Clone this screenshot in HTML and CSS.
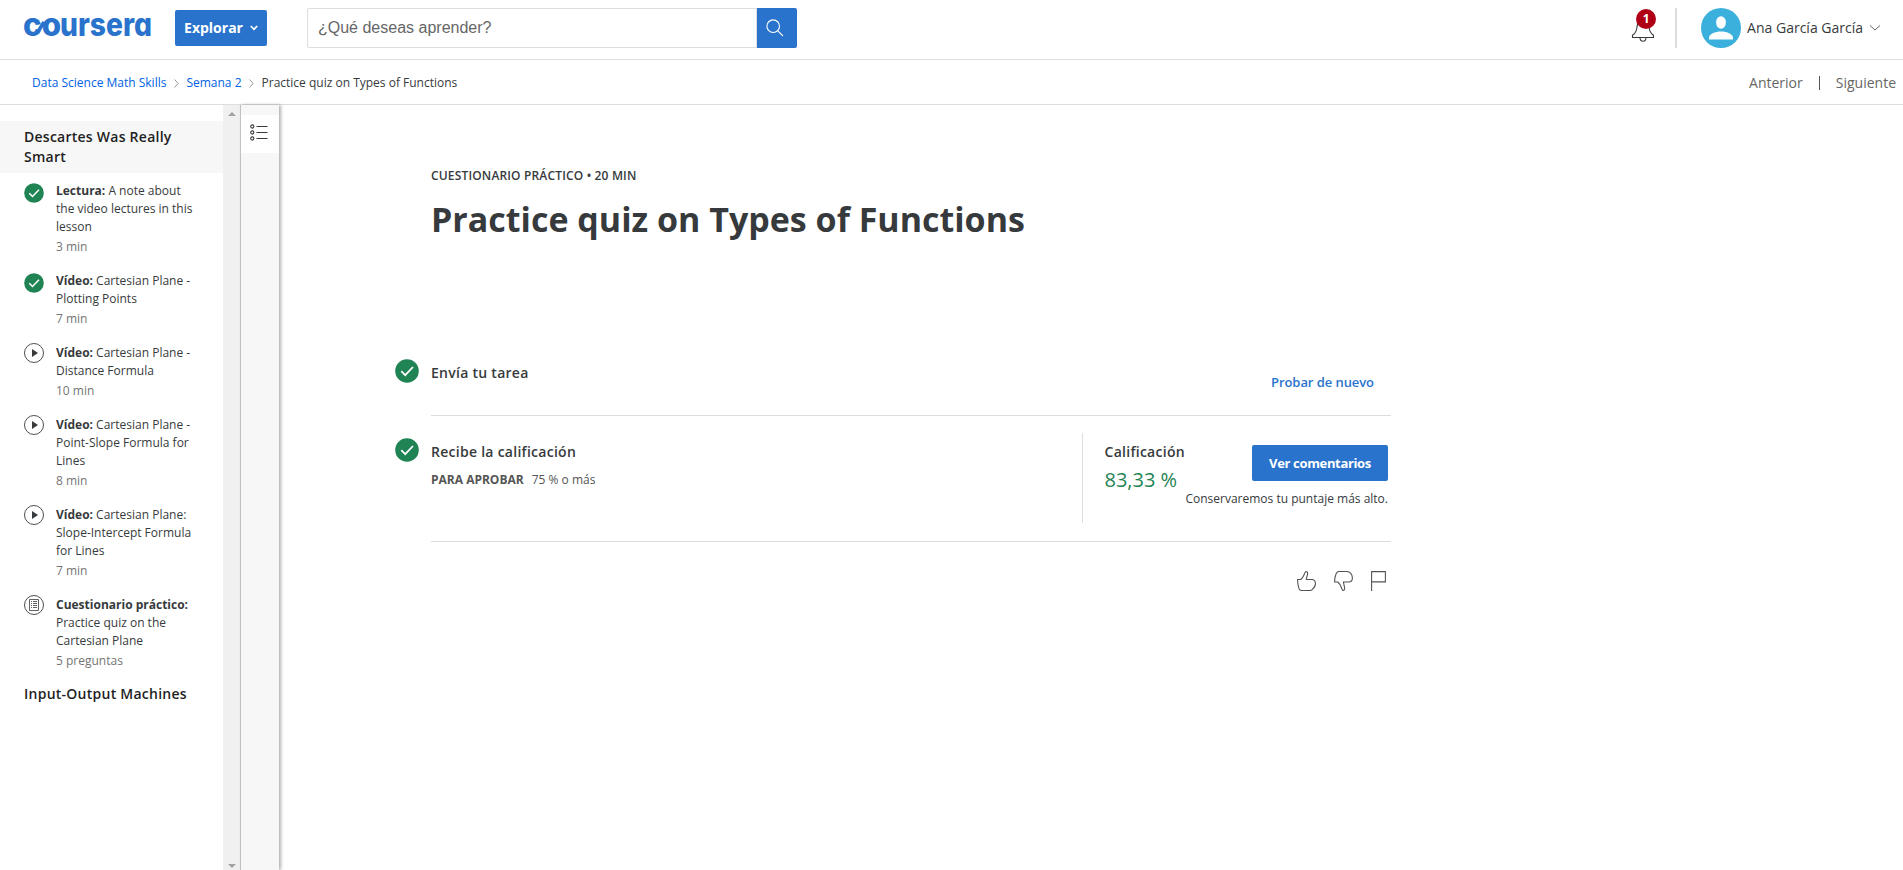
FILE: index.html
```html
<!DOCTYPE html>
<html lang="es">
<head>
<meta charset="utf-8">
<title>Practice quiz on Types of Functions | Coursera</title>
<link rel="stylesheet" href="styles.css">
</head>
<body>
<svg class="defs" width="0" height="0">
  <symbol id="done" viewBox="0 0 24 24"><circle cx="12" cy="12" r="11.800" fill="#1f8354"/><path d="M6.300 12.200l3.900 4L18 8" fill="none" stroke="#fff" stroke-width="1.800"/></symbol>
  <symbol id="play" viewBox="0 0 20 20"><circle cx="10" cy="10" r="9.500" fill="none" stroke="#373a3c" stroke-width=".9"/><path d="M8 6l6 4-6 4z" fill="#373a3c"/></symbol>
  <symbol id="quiz" viewBox="0 0 20 20"><circle cx="10" cy="10" r="9.500" fill="none" stroke="#373a3c" stroke-width=".9"/><path d="M5.500 4.500h9v11h-9zM7 6.500h1M9 6.500h4M7 8.500h1M9 8.500h4M7 10.500h1M9 10.500h4M7 12.500h1M9 12.500h4" fill="none" stroke="#373a3c" stroke-width=".8"/></symbol>
</svg>
<header class="topbar">
  <svg class="logo" width="128" height="24" viewBox="0 0 128 24"><text y="21.500"><tspan x="-1" textLength="38" lengthAdjust="spacingAndGlyphs">co</tspan><tspan x="36" textLength="92" lengthAdjust="spacingAndGlyphs">ursera</tspan></text><path d="M13.500 18.500L20 8" stroke="#2a73cc" stroke-width="3.600"/></svg>
  <button class="explore">Explorar <svg width="8" height="6" viewBox="0 0 8 6"><path d="M.8 1L4 4.300 7.200 1" fill="none" stroke="#fff" stroke-width="1.700"/></svg></button>
  <div class="search"><div class="field">¿Qué deseas aprender?</div><button class="go"><svg width="18" height="18" viewBox="0 0 18 18"><path d="M11.800 11.800L17 17M13.500 7.200a6.300 6.300 0 1 1-12.600 0 6.300 6.300 0 0 1 12.600 0z" fill="none" stroke="#fff" stroke-width="1.100"/></svg></button></div>
  <div class="account">
    <div class="bell"><svg width="24" height="26" viewBox="0 0 24 26"><path d="M1.500 20.500v-2.200c3.200-2 4-4 4.500-8.300C6.500 5.500 8.500 3 12 3s5.500 2.500 6 7c.5 4.300 1.300 6.300 4.500 8.300v2.200zM9 20.500a3 3.700 0 0 0 6 0" fill="none" stroke="#373a3c" stroke-width="1.100"/></svg><span class="badge">1</span></div>
    <svg class="avatar" width="40" height="40" viewBox="0 0 40 40"><circle cx="20" cy="20" r="20" fill="#3bb0dc"/><ellipse cx="20" cy="14.500" rx="4.900" ry="6.200" fill="#fff"/><path d="M8 31.500v-1.500c0-4 6-6.500 12-6.500s12 2.500 12 6.500v1.500z" fill="#fff"/></svg>
    <span class="name">Ana García García</span>
    <svg width="12" height="8" viewBox="0 0 12 8"><path d="M1 1.500l5 4.500 5-4.500" fill="none" stroke="#666" stroke-width="1"/></svg>
  </div>
</header>
<nav class="crumbs">
  <a>Data Science Math Skills</a><svg width="5" height="9" viewBox="0 0 5 9"><path d="M.5.5l3.700 4-3.700 4" fill="none" stroke="#888" stroke-width=".9"/></svg><a>Semana 2</a><svg width="5" height="9" viewBox="0 0 5 9"><path d="M.5.5l3.700 4-3.700 4" fill="none" stroke="#888" stroke-width=".9"/></svg><span class="current">Practice quiz on Types of Functions</span>
  <div class="pager"><span>Anterior</span><i></i><span class="next">Siguiente</span></div>
</nav>
<div class="body">
  <aside class="side">
    <h2 class="lesson active">Descartes Was Really Smart</h2>
    <ul class="items">
      <li class="complete"><svg><use href="#done"/></svg><div><b>Lectura:</b> A note about the video lectures in this lesson<small>3 min</small></div></li>
      <li class="complete"><svg><use href="#done"/></svg><div><b>Vídeo:</b> Cartesian Plane - Plotting Points<small>7 min</small></div></li>
      <li><svg><use href="#play"/></svg><div><b>Vídeo:</b> Cartesian Plane - Distance Formula<small>10 min</small></div></li>
      <li><svg><use href="#play"/></svg><div><b>Vídeo:</b> Cartesian Plane - Point-Slope Formula for Lines<small>8 min</small></div></li>
      <li><svg><use href="#play"/></svg><div><b>Vídeo:</b> Cartesian Plane: Slope-Intercept Formula for Lines<small>7 min</small></div></li>
      <li><svg><use href="#quiz"/></svg><div><b>Cuestionario práctico:</b> Practice quiz on the Cartesian Plane<small>5 preguntas</small></div></li>
    </ul>
    <h2 class="lesson">Input-Output Machines</h2>
  </aside>
  <div class="scroll"><i class="up"></i><i class="down"></i></div>
  <div class="rail"><div class="toggle"><svg width="18" height="18" viewBox="0 0 18 18"><path d="M6.500 2.500h11M6.500 8.500h11M6.500 14.500h11" stroke="#373a3c"/><g fill="none" stroke="#373a3c" stroke-width="1.100"><circle cx="2.300" cy="2.500" r="1.600"/><circle cx="2.300" cy="8.500" r="1.600"/><circle cx="2.300" cy="14.500" r="1.600"/></g></svg></div></div>
  <main class="main">
    <div class="eyebrow">CUESTIONARIO PRÁCTICO • 20 MIN</div>
    <h1>Practice quiz on Types of Functions</h1>
    <section class="step submit">
      <svg class="mark"><use href="#done"/></svg>
      <h3>Envía tu tarea</h3>
      <a class="retry">Probar de nuevo</a>
    </section>
    <section class="step grade">
      <svg class="mark"><use href="#done"/></svg>
      <div class="info"><h3>Recibe la calificación</h3><p><b>PARA APROBAR</b><span>75 % o más</span></p></div>
      <div class="score"><h3>Calificación</h3><div class="pct">83,33 %</div></div>
      <div class="feedback"><button>Ver comentarios</button><p>Conservaremos tu puntaje más alto.</p></div>
    </section>
    <div class="reactions">
      <svg width="19" height="20" viewBox="0 0 19 20"><path d="M.6 8.500h3.200C6.500 6.500 7 3.500 8.300 1.100 9 .2 10.700.8 10.700 2.400c0 2-1.400 3.800-1.400 6.100h5.200c2.500 0 3.900 1.800 3.900 4 0 2.800-1 4.300-2.700 5.500-.6 1-1.300 1.500-2.700 1.500H4.500c-1.500 0-2.400-1-2.700-2.500C1 14.500.6 11.500.6 8.500z"/></svg>
      <svg width="19" height="20" viewBox="0 0 19 20"><path d="M.6 11h3.200c2.700 2 3.200 5 4.500 7.900.8 1 2.400.4 2.400-1.200 0-2.200-1.200-4.500-1.200-6.700h5c2.500 0 3.900-1.800 3.900-4 0-3.800-2.400-6.500-5.400-6.500H4.800C3.200.5 2.700 1.500 2 3 1 5.500.6 8 .6 11z"/></svg>
      <svg width="15" height="20" viewBox="0 0 15 20"><path d="M.6 20V.6h13.800v10.300H.6"/></svg>
    </div>
  </main>
</div>
</body>
</html>
```
FILE: styles.css
```css
* { box-sizing: border-box; }
body { margin: 0; height: 870px; overflow: hidden; display: flex; flex-direction: column; background: #fff; color: #373a3c; font: 14px/20px "Open Sans", sans-serif; }
h1, h2, h3, p, ul { margin: 0; padding: 0; }
button { border: 0; font: inherit; color: #fff; background: #2a73cc; padding: 0; }
.defs { position: absolute; }

.topbar { height: 60px; flex: none; display: flex; border-bottom: 1px solid #ddd; padding: 8px 22px 0 24px; }
.logo { margin: 6px 0 0; overflow: visible; }
.logo text { font: 800 32px "Inter", sans-serif; font-feature-settings: "cv11"; fill: #2a73cc; }
.explore { width: 92px; height: 36px; margin: 2px 0 0 23px; border-radius: 2px; font-weight: 700; display: flex; align-items: center; justify-content: center; gap: 7px; }
.search { display: flex; width: 490px; height: 40px; margin-left: 40px; }
.field { flex: 1; border: 1px solid #ddd; border-radius: 2px 0 0 2px; padding: 0 10px; color: #666; font: 16px/37px "Liberation Sans", sans-serif; }
.go { width: 40px; border-radius: 0 2px 2px 0; display: flex; align-items: center; justify-content: center; padding-right: 4px; }
.account { margin-left: auto; display: flex; align-items: center; height: 40px; }
.bell { position: relative; width: 46px; height: 40px; border-right: 2px solid #ddd; padding-top: 9px; }
.badge { position: absolute; left: 5px; top: 1px; width: 20px; height: 20px; border-radius: 50%; background: #b00016; color: #fff; font: 700 12px/20px "Open Sans", sans-serif; text-align: center; }
.avatar { margin: 0 6px 0 24px; }
.name { margin-right: 6px; }

.crumbs { height: 45px; flex: none; display: flex; align-items: center; border-bottom: 1px solid #ddd; padding: 2px 7px 0 32px; font-size: 12px; gap: 7.5px; }
.crumbs a { color: #0062e4; }
.pager { margin-left: auto; display: flex; align-items: center; font-size: 14px; color: #666; }
.pager i { width: 1px; height: 14px; background: #555; margin: 0 16px; }

.body { flex: 1; display: flex; min-height: 0; }
.side { width: 223px; padding-top: 16px; }
.lesson { font-size: 14px; line-height: 20px; font-weight: 600; letter-spacing: .25px; color: #1f1f1f; padding: 6px 24px; }
.lesson.active { background: #f7f7f7; }
.items { list-style: none; padding: 9px 24px 0; font-size: 12px; line-height: 18px; }
.items li { display: flex; gap: 12px; padding-bottom: 16px; }
.items li:last-child { padding-bottom: 8px; }
.items li > svg { flex: none; width: 20px; height: 20px; margin-top: -1px; }
.items .complete > svg { margin-top: 1px; }
.items small { display: block; font-size: 12px; color: #757575; margin-top: 2px; }
.scroll { width: 17px; background: #f0f0f0; display: flex; flex-direction: column; justify-content: space-between; align-items: center; padding: 7px 0 2px; }
.scroll i { border: 4px solid transparent; }
.scroll .up { border-top: 0; border-bottom-color: #a3a3a3; }
.scroll .down { border-bottom: 0; border-top-color: #a3a3a3; }
.rail { width: 39px; border-left: 1px solid #c1c1c1; background: #f7f7f7; box-shadow: 2px 0 3px rgba(0,0,0,.3); padding-top: 10px; }
.toggle { height: 38px; background: #fff; padding: 9px; }

.main { width: 985px; margin-left: 127px; padding-top: 61px; }
.eyebrow { font-size: 12px; font-weight: 600; letter-spacing: .16px; padding-left: 25px; line-height: 20px; }
h1 { font-size: 34px; line-height: 44px; font-weight: 700; padding-left: 25px; margin-top: 11px; }
h3 { font-size: 14px; line-height: 20px; font-weight: 600; letter-spacing: .27px; }
.step { display: flex; margin-left: 25px; border-bottom: 1px solid #ddd; }
.mark { flex: none; width: 24px; height: 24px; margin: 0 12px 0 -36px; }
.submit { margin-top: 118px; height: 57px; }
.submit h3 { padding-top: 4px; }
.retry { margin: 13px 17px 0 auto; color: #2a73cc; font-size: 13px; font-weight: 600; letter-spacing: -.07px; }
.grade { height: 126px; padding-top: 17px; }
.grade .mark { margin-top: 5px; }
.info { padding-top: 9px; width: 651px; }
.info p { font-size: 12px; margin-top: 8px; color: #555; display: flex; gap: 8px; }
.score { border-left: 1px solid #ddd; padding: 9px 0 0 21.500px; height: 90px; }
.pct { font-size: 20px; line-height: 28px; margin-top: 4px; color: #1f8354; white-space: nowrap; }
.feedback { margin: 12px 3px 0 auto; display: flex; flex-direction: column; align-items: flex-end; font-size: 12px; white-space: nowrap; }
.feedback button { width: 136px; height: 36px; border-radius: 2px; font-size: 13px; font-weight: 700; letter-spacing: -.35px; }
.feedback p { margin-top: 8px; }
.reactions { display: flex; justify-content: flex-end; gap: 18px; padding: 29px 5px 0 0; }
.reactions svg { fill: none; stroke: #555; stroke-width: 1.100; }
```
